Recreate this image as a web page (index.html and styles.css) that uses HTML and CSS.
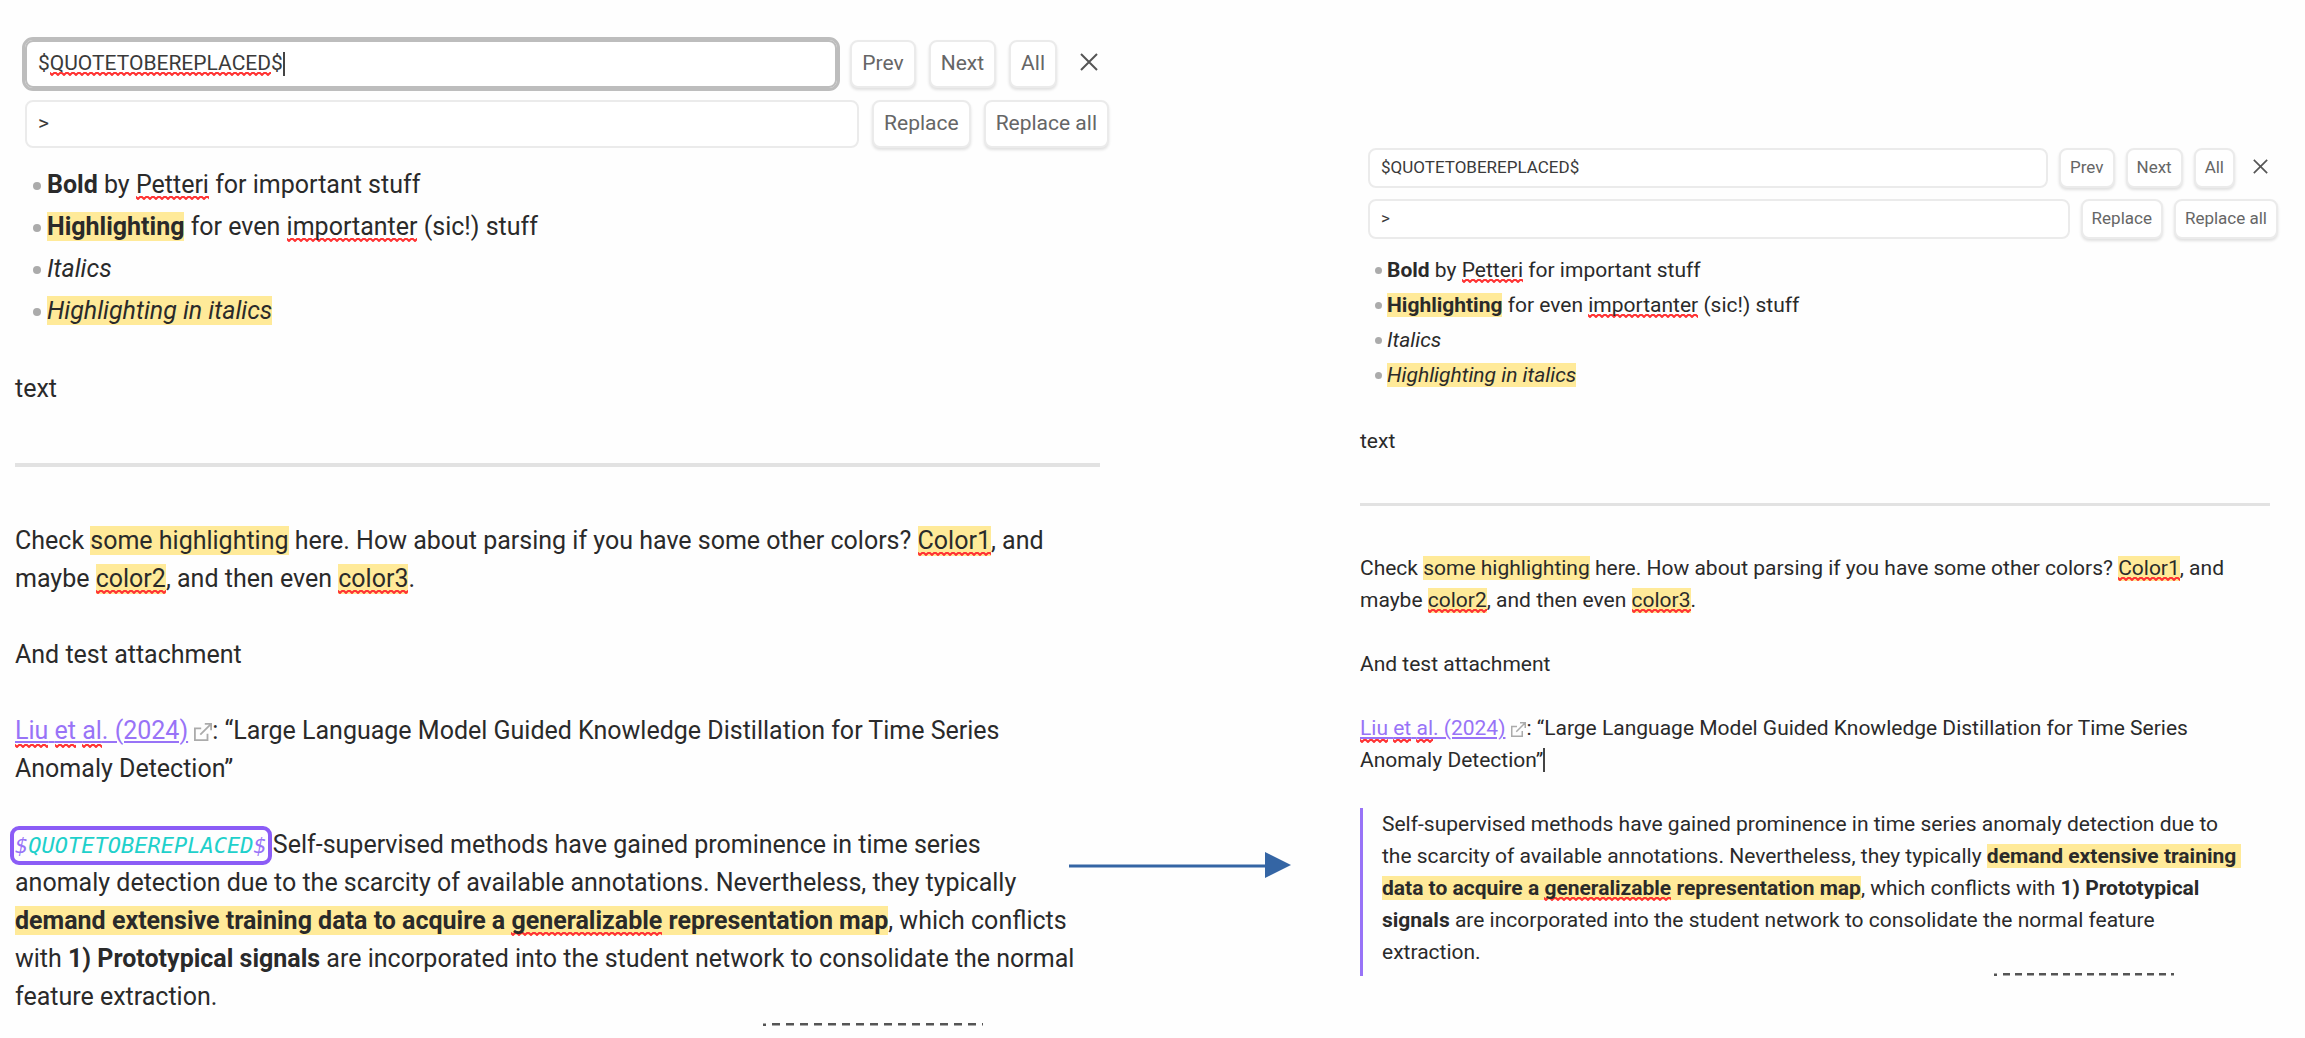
FILE: index.html
```html
<!DOCTYPE html>
<html lang="en">
<head>
<meta charset="utf-8">
<title>Find and replace: before and after</title>
<link rel="stylesheet" href="styles.css">
</head>
<body>
<main class="comparison">
  <section class="pane pane-before" aria-label="Before">
    <form class="search">
      <div class="search-row">
        <div class="field field-active">
          <input class="search-input" type="text" aria-label="Find" value="$QUOTETOBEREPLACED$">
          <div class="field-marks" aria-hidden="true"></div>
        </div>
        <button class="btn" type="button">Prev</button>
        <button class="btn" type="button">Next</button>
        <button class="btn" type="button">All</button>
        <button class="close" type="button" aria-label="Close">
          <svg class="close-icon" viewBox="0 0 18 18"><path d="M1 1 17 17M17 1 1 17"/></svg>
        </button>
      </div>
      <div class="search-row">
        <div class="field"><input class="search-input" type="text" aria-label="Replace with" value="&gt;"></div>
        <button class="btn" type="button">Replace</button>
        <button class="btn" type="button">Replace all</button>
      </div>
    </form>
    <article class="note">
      <ul class="list">
        <li><strong>Bold</strong> by <span class="typo">Petteri</span> for important stuff</li>
        <li><mark><strong>Highlighting</strong></mark> for even <span class="typo">importanter</span> (sic!) stuff</li>
        <li><em>Italics</em></li>
        <li><mark><em>Highlighting in italics</em></mark></li>
      </ul>
      <p>text</p>
      <hr>
      <p>Check <mark>some highlighting</mark> here. How about parsing if you have some other colors? <mark class="typo">Color1</mark>, and<br>maybe <mark class="typo">color2</mark>, and then even <mark class="typo">color3</mark>.</p>
      <p>And test attachment</p>
      <p><a class="cite" href="#"><span class="typo">Liu</span> <span class="typo">et</span> <span class="typo">al</span>. (2024)</a><svg class="ext" viewBox="0 0 20 20"><path d="M8 6H1V19H15V12M12 1H19V8M19 1 7 13"/></svg>: “Large Language Model Guided Knowledge Distillation for Time Series<br>Anomaly Detection”</p>
      <p><code class="math"><span class="delim">$</span>QUOTETOBEREPLACED<span class="delim">$</span></code> Self-supervised methods have gained prominence in time series<br>anomaly detection due to the scarcity of available annotations. Nevertheless, they typically<br><mark><strong>demand extensive training data to acquire a <span class="typo">generalizable</span> representation map</strong></mark>, which conflicts<br>with <strong>1) Prototypical signals</strong> are incorporated into the student network to consolidate the normal<br>feature extraction.</p>
    </article>
    <svg class="dashes" viewBox="0 0 220 3"><path d="M0 2H3M9 1H220"/></svg>
  </section>

  <svg class="arrow" viewBox="0 0 222 26"><path d="M0 14H197" stroke="#3465a4" stroke-width="3"/><path d="M196 0 222 13 196 26Z" fill="#3465a4"/></svg>

  <section class="pane pane-after" aria-label="After">
    <form class="search">
      <div class="search-row">
        <div class="field"><input class="search-input" type="text" aria-label="Find" value="$QUOTETOBEREPLACED$"></div>
        <button class="btn" type="button">Prev</button>
        <button class="btn" type="button">Next</button>
        <button class="btn" type="button">All</button>
        <button class="close" type="button" aria-label="Close">
          <svg class="close-icon" viewBox="0 0 18 18"><path d="M1 1 17 17M17 1 1 17"/></svg>
        </button>
      </div>
      <div class="search-row">
        <div class="field"><input class="search-input" type="text" aria-label="Replace with" value="&gt;"></div>
        <button class="btn" type="button">Replace</button>
        <button class="btn" type="button">Replace all</button>
      </div>
    </form>
    <article class="note">
      <ul class="list">
        <li><strong>Bold</strong> by <span class="typo">Petteri</span> for important stuff</li>
        <li><mark><strong>Highlighting</strong></mark> for even <span class="typo">importanter</span> (sic!) stuff</li>
        <li><em>Italics</em></li>
        <li><mark><em>Highlighting in italics</em></mark></li>
      </ul>
      <p>text</p>
      <hr>
      <p>Check <mark>some highlighting</mark> here. How about parsing if you have some other colors? <mark class="typo">Color1</mark>, and<br>maybe <mark class="typo">color2</mark>, and then even <mark class="typo">color3</mark>.</p>
      <p>And test attachment</p>
      <p><a class="cite" href="#"><span class="typo">Liu</span> <span class="typo">et</span> <span class="typo">al</span>. (2024)</a><svg class="ext" viewBox="0 0 20 20"><path d="M8 6H1V19H15V12M12 1H19V8M19 1 7 13"/></svg>: “Large Language Model Guided Knowledge Distillation for Time Series<br>Anomaly <span class="caret">Detection”</span></p>
      <blockquote>Self-supervised methods have gained prominence in time series anomaly detection due to<br>the scarcity of available annotations. Nevertheless, they typically <mark><strong>demand extensive training&nbsp;<br>data to acquire a <span class="typo">generalizable</span> representation map</strong></mark>, which conflicts with <strong>1) Prototypical<br>signals</strong> are incorporated into the student network to consolidate the normal feature<br>extraction.</blockquote>
    </article>
    <svg class="dashes" viewBox="0 0 180 3"><path d="M0 2H3M9 1H180"/></svg>
  </section>
</main>
</body>
</html>
```
FILE: styles.css
```css
* { box-sizing: border-box; }

body {
  margin: 0;
  background: #fefefe;
  color: #2a2a2a;
  font-family: Roboto, "Liberation Sans", sans-serif;
}

.comparison {
  display: grid;
  grid-template-columns: 1069fr 222fr 1014fr;
  align-items: start;
}

/* Each pane is one note at its own zoom level. */
.pane {
  display: flex;
  flex-direction: column;
}

.pane-before {
  --line: 38px;
  --item: 42px;
  --ui: 21px;
  --control: 48px;
  --gap: 13px;
  --pad: 10px;
  --hr: 4px;
  --indent: 32px;
  --dot: 8px;
  --icon: 18px;
  --dash: 8px 6px;
  padding: 40px 0 0 15px;
  margin-right: -46px;
  font-size: 25px;
}

.pane-after {
  --line: 32px;
  --item: 35px;
  --ui: 17px;
  --control: 40px;
  --gap: 11px;
  --pad: 9px;
  --hr: 3px;
  --indent: 27px;
  --dot: 7px;
  --icon: 15px;
  --dash: 7px 5px;
  padding: 148px 0 0 69px;
  font-size: 21px;
}

.search {
  display: flex;
  flex-direction: column;
}

.pane-before .search { gap: 12px; padding: 0 6px 0 10px; }
.pane-after .search { gap: 11px; padding: 0 27px 0 8px; }

.search-row {
  display: flex;
  gap: var(--gap);
}

.field {
  position: relative;
  display: flex;
  flex: 1;
}

.search-input {
  flex: 1;
  min-width: 0;
  height: var(--control);
  padding: 0 11px 2px;
  border: 2px solid #ebebeb;
  border-radius: 8px;
  background: #fff;
  color: #3a3a3a;
  font: inherit;
  font-size: var(--ui);
}

.field-active .search-input {
  border-color: #bdbdbd;
  outline: 3px solid #bdbdbd;
}

/* Spell-check wave and text cursor over the focused field. */
.field-marks {
  position: absolute;
  left: 25px;
  top: 12px;
  width: 235px;
  height: 24px;
  padding-right: 12px;
  border-right: 2px solid #444;
  background: url("data:image/svg+xml,%3Csvg xmlns='http://www.w3.org/2000/svg' width='6' height='4'%3E%3Cpath d='M-1 0 2 3 5 0 8 3' fill='none' stroke='%23ff3434' stroke-width='2'/%3E%3C/svg%3E") 0 100% / 6px 4px repeat-x content-box;
}

.btn {
  height: var(--control);
  padding: 0 var(--pad) 2px;
  border: 2px solid #ebebeb;
  border-radius: 8px;
  background: #fff;
  box-shadow: 0 2px 3px rgba(0, 0, 0, 0.12);
  color: #666;
  font: inherit;
  font-size: var(--ui);
}

.close {
  display: flex;
  align-items: center;
  padding: 0 11px 4px 10px;
  border: 0;
  background: none;
}

.pane-after .close { padding: 0 10px 4px 7px; }

.close-icon {
  width: var(--icon);
  height: var(--icon);
  fill: none;
  stroke: #555;
  stroke-width: 2;
}

.note {
  line-height: var(--line);
  white-space: nowrap;
}

.pane-before .note { padding: 16px 15px 0 0; }
.pane-after .note { padding: 14px 35px 0 0; }

p { margin: 0 0 var(--line); }
p:last-child { margin-bottom: 0; }
strong { font-weight: 700; }

.list {
  margin: 0 0 var(--line);
  padding: 0 0 0 var(--indent);
  list-style: none;
}

.list li {
  position: relative;
  line-height: var(--item);
}

.list li::before {
  content: "";
  position: absolute;
  left: -14px;
  top: 18px;
  width: var(--dot);
  height: var(--dot);
  border-radius: 50%;
  background: #ababab;
}

.pane-after .list li::before { left: -12px; top: 14px; }

hr {
  height: var(--hr);
  margin: 55px 0;
  border: 0;
  background: #e2e2e2;
}

.pane-after hr { margin: 46px 0; }

mark {
  background-color: #ffea99;
  color: inherit;
}

.typo {
  padding-bottom: 1px;
  background-image: url("data:image/svg+xml,%3Csvg xmlns='http://www.w3.org/2000/svg' width='6' height='4'%3E%3Cpath d='M-1 0 2 3 5 0 8 3' fill='none' stroke='%23ff3434' stroke-width='2'/%3E%3C/svg%3E");
  background-position: 0 100%;
  background-repeat: repeat-x;
  background-size: 6px 4px;
}

.cite {
  color: #9873f7;
  text-decoration-thickness: 2px;
  text-underline-offset: 2px;
}

.cite .typo { padding-bottom: 3px; }

.ext {
  width: var(--icon);
  height: var(--icon);
  margin-left: 6px;
  vertical-align: -2px;
  fill: none;
  stroke: #ababab;
  stroke-width: 2;
}

.math {
  padding: 2px 0;
  outline: 4px solid #8b5cf6;
  outline-offset: 1px;
  border-radius: 4px;
  color: #1fd0cb;
  font-family: "DejaVu Sans Mono", "Liberation Mono", monospace;
  font-size: 22px;
  font-style: italic;
  line-height: 1;
}

.delim { color: #9873f7; }

.caret { border-right: 2px solid #444; }

blockquote {
  margin: 0;
  padding: 0 0 8px 19px;
  border-left: 3px solid #9873f7;
}

.dashes {
  align-self: end;
  fill: none;
  stroke: #555;
  stroke-width: 3;
  stroke-dasharray: var(--dash);
}

.pane-before .dashes { width: 220px; margin: 7px 132px 0 0; }
.pane-after .dashes { width: 180px; margin: -3px 131px 0 0; }

.arrow {
  width: 100%;
  margin-top: 852px;
}
```
